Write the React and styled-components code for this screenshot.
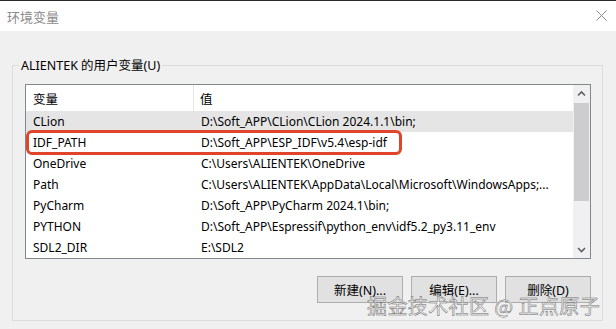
import React from 'react'
import styled, { createGlobalStyle } from 'styled-components'

const Global = createGlobalStyle`
  html, body {
    margin: 0;
    padding: 0;
    background: #f0f0f0;
  }
  body {
    font-family: "Noto Sans", "Noto Sans CJK SC", sans-serif;
    font-size: 12px;
    color: #000;
  }
`

const Window = styled.div`
  position: relative;
  width: 616px;
  height: 329px;
  display: flex;
  flex-direction: column;
  background: #f0f0f0;
  overflow: hidden;
`

const TitleBar = styled.div`
  height: 30px;
  border-top: 1px solid #2b2b2b;
  background: #fff;
  display: flex;
  align-items: center;
  justify-content: space-between;
  padding: 0 9px 0 7px;
  color: #8a8a8a;
  font-size: 13px;
`

const Close = styled.svg`
  width: 11px;
  height: 11px;
  margin-top: -1px;
`

const Body = styled.div`
  flex: 1;
  padding: 26px 13px 8px 12px;
  display: flex;
`

const Group = styled.fieldset`
  flex: 1;
  margin: 0;
  padding: 0 11px 0 12px;
  border: 1px solid #dcdcdc;
  min-width: 0;
`

const Legend = styled.legend`
  margin-left: -6px;
  padding: 0 2px;
  line-height: 17px;
  font-size: 12.5px;
`

const List = styled.div`
  margin-top: 10px;
  height: 173px;
  border: 1px solid #828790;
  background: #fff;
  display: flex;
`

const Rows = styled.div`
  flex: 1;
  display: flex;
  flex-direction: column;
`

const Header = styled.div`
  height: 26px;
  display: grid;
  grid-template-columns: 168px 1fr;
  align-items: stretch;
  font-size: 12.5px;
`

const HeadCell = styled.div`
  display: flex;
  align-items: center;
  padding-left: ${p => (p.$first ? '7px' : '6px')};
  border-right: ${p => (p.$first ? '1px solid #e5e5e5' : 'none')};
`

const Row = styled.div`
  position: relative;
  height: 21px;
  display: grid;
  grid-template-columns: 168px 1fr;
  align-items: center;
  background: ${p => (p.$selected ? '#e5e5e5' : 'transparent')};
  white-space: nowrap;
`

const Cell = styled.div`
  padding-left: 7px;
  overflow: hidden;
`

const Mark = styled.div`
  position: absolute;
  left: 0;
  top: -2px;
  width: 370px;
  height: 19px;
  border: 3px solid #e0442b;
  border-radius: 6px;
  pointer-events: none;
`

const ScrollBar = styled.div`
  width: 17px;
  background: #f0f0f0;
  display: flex;
  flex-direction: column;
  align-items: center;
`

const Arrow = styled.svg`
  width: 17px;
  height: 17px;
  flex: none;
`

const Track = styled.div`
  flex: 1;
  width: 15px;
  padding-top: 1px;
`

const Thumb = styled.div`
  height: 98px;
  background: #cdcdcd;
`

const Buttons = styled.div`
  margin-top: 17px;
  display: flex;
  justify-content: flex-end;
  gap: 8px;
`

const Button = styled.div`
  width: 84px;
  height: 25px;
  border: 1px solid #adadad;
  background: #e1e1e1;
  display: flex;
  align-items: center;
  justify-content: center;
  font-size: 12.5px;
`

const Watermark = styled.div`
  position: absolute;
  left: 367px;
  top: 292px;
  font-size: 20px;
  line-height: 28px;
  color: #f4f4f4;
  letter-spacing: 0.4px;
  white-space: nowrap;
  -webkit-text-stroke: 0.5px #6a6a6a;
  font-family: "Noto Sans CJK SC", "Noto Sans", sans-serif;
`

const vars = [
  ['CLion', 'D:\\Soft_APP\\CLion\\CLion 2024.1.1\\bin;'],
  ['IDF_PATH', 'D:\\Soft_APP\\ESP_IDF\\v5.4\\esp-idf'],
  ['OneDrive', 'C:\\Users\\ALIENTEK\\OneDrive'],
  ['Path', 'C:\\Users\\ALIENTEK\\AppData\\Local\\Microsoft\\WindowsApps;...'],
  ['PyCharm', 'D:\\Soft_APP\\PyCharm 2024.1\\bin;'],
  ['PYTHON', 'D:\\Soft_APP\\Espressif\\python_env\\idf5.2_py3.11_env'],
  ['SDL2_DIR', 'E:\\SDL2'],
]

export default function App() {
  return (
    <Window>
      <Global />
      <TitleBar>
        <span>环境变量</span>
        <Close viewBox="0 0 11 11">
          <path d="M0.5 0.5L10.5 10.5M10.5 0.5L0.5 10.5" stroke="#8a8a8a" strokeWidth="1" fill="none" />
        </Close>
      </TitleBar>
      <Body>
        <Group>
          <Legend>ALIENTEK 的用户变量(U)</Legend>
          <List>
            <Rows>
              <Header>
                <HeadCell $first>变量</HeadCell>
                <HeadCell>值</HeadCell>
              </Header>
              {vars.map(([name, value], i) => (
                <Row key={name} $selected={i === 0}>
                  <Cell>{name}</Cell>
                  <Cell>{value}</Cell>
                  {name === 'IDF_PATH' && <Mark />}
                </Row>
              ))}
            </Rows>
            <ScrollBar>
              <Arrow viewBox="0 0 17 17">
                <path d="M5 10.5L8.5 7L12 10.5" stroke="#606060" strokeWidth="1.6" fill="none" />
              </Arrow>
              <Track>
                <Thumb />
              </Track>
              <Arrow viewBox="0 0 17 17">
                <path d="M5 7L8.5 10.5L12 7" stroke="#606060" strokeWidth="1.6" fill="none" />
              </Arrow>
            </ScrollBar>
          </List>
          <Buttons>
            <Button>新建(N)...</Button>
            <Button>编辑(E)...</Button>
            <Button>删除(D)</Button>
          </Buttons>
        </Group>
      </Body>
      <Watermark>掘金技术社区 @ 正点原子</Watermark>
    </Window>
  )
}
